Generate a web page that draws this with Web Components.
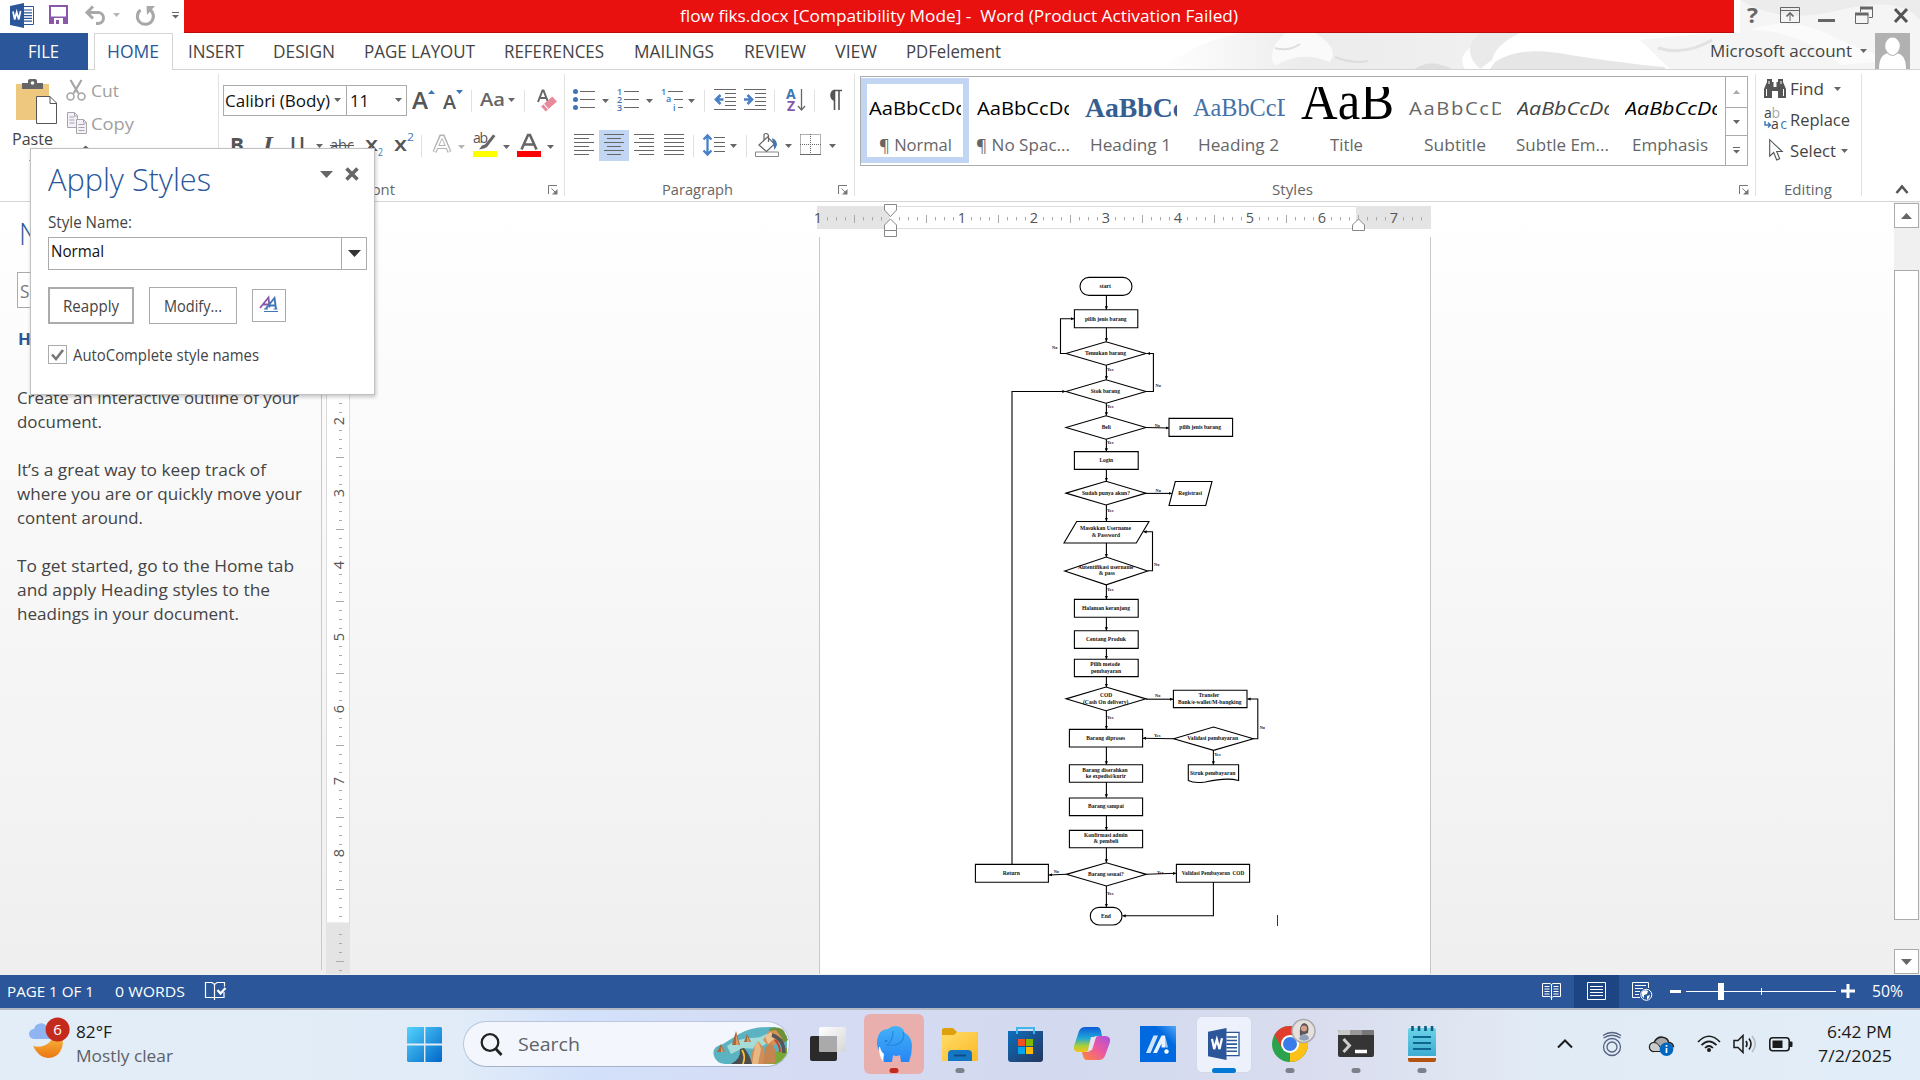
<!DOCTYPE html>
<html lang="en">
<head>
<meta charset="utf-8">
<title>flow fiks.docx - Word</title>
<style>
html,body{margin:0;padding:0;width:1920px;height:1080px;overflow:hidden;background:#fff}
body{font-family:"Open Sans","Noto Sans",sans-serif;color:#444}
</style>
</head>
<body>
<word-desktop></word-desktop>
<script>
const SERIF = "'Liberation Serif',serif";

/* ---------- layout helpers ---------- */
// One flex row: items are [x, width, y, height, html] in window coordinates, turned into margins.
function row(top, height, items, left = 0) {
  let end = left;
  const body = items.map(([x, w, y, h, html]) => {
    const s = `<div style="flex:none;width:${w}px;height:${h}px;margin:${y - top}px 0 0 ${x - end}px">${html}</div>`;
    end = x + w;
    return s;
  }).join('');
  return `<div style="display:flex;align-items:flex-start;height:${height}px">${body}</div>`;
}
// A text fitted between two ink edges, on a baseline.
function T(x1, x2, base, size, text, style = '', serif = false) {
  const w = x2 - x1 + 2, k = serif ? 0.3375 : 0.388;
  return [x1 - 1, w, Math.round(base - 12 - k * size), 24,
    `<fit-text w="${w}" style="font-size:${size}px;${serif ? `font-family:${SERIF};` : ''}${style}">${text}</fit-text>`];
}
function I(x, y, w, h, body, attrs = '') {
  return [x, w, y, h, `<svg width="${w}" height="${h}" viewBox="0 0 ${w} ${h}" style="display:block;overflow:visible" fill="none" ${attrs}>${body}</svg>`];
}
const arrow = (x, y, c = '#666', w = 7, h = 4) => I(x, y, w, h, `<path d="M0 0h${w}L${w / 2} ${h}z" fill="${c}"/>`);
const vsep = (x, y, h, c = '#e1e1e1') => [x, 1, y, h, `<div style="width:1px;height:${h}px;background:${c}"></div>`];
const launcher = (x, y) => I(x, y, 10, 10, '<path d="M.5 9V.5H9" stroke="#777"/><path d="M3.500 3.500l4 4" stroke="#777"/><path d="M9.500 4v5.500h-5.500z" fill="#777"/>');

function define(name, css, html, after) {
  customElements.define(name, class extends HTMLElement {
    constructor() { super(); this.attachShadow({ mode: 'open' }); }
    connectedCallback() {
      this.shadowRoot.innerHTML = `<style>:host{display:block}*{box-sizing:border-box}${css}</style>` + (typeof html === 'function' ? html(this) : html);
      if (after) after(this);
    }
  });
}

define('fit-text', ':host{line-height:24px;white-space:pre}span{display:inline-block;transform-origin:0 50%}:host([strike]) span{text-decoration:line-through}', '<span><slot></slot></span>', el => {
  const s = el.shadowRoot.querySelector('span'), w = +el.getAttribute('w');
  const n = s.getBoundingClientRect().width;
  if (w && n) s.style.transform = `scaleX(${w / n})`;
  el.style.width = w + 'px';
});

const wordLogo = `<path d="M12 3.500h11.500v18H12z" fill="#fff" stroke="#2b579a"/><path d="M14 7h8M14 9.800h8M14 12.600h8M14 15.400h8M14 18.200h8" stroke="#2b579a" stroke-width="1.200"/><path d="M0 3L14 0v25L0 22z" fill="#2b579a"/><path d="M3 8.500l1.700 8 2-7.500 2 7.500 1.900-8.500" stroke="#fff" stroke-width="1.700"/>`;

/* ---------- title bar ---------- */
define('title-bar', ':host{height:33px;position:relative}.red{background:#e91010;border-bottom:1px solid #b90c0c;height:33px}', () => row(0, 33, [
  I(10, 3, 24, 25, wordLogo),
  I(49, 5, 19, 19, '<path d="M1 1h17v17H1z" stroke="#8a58a9" stroke-width="2"/><path d="M0 11.500h19V19H0z" fill="#8a58a9"/><path d="M5 13h9v6H5z" fill="#fff"/><path d="M7 15h3v4H7z" fill="#8a58a9"/>'),
  I(85, 6, 21, 19, '<path d="M2 6.500h11a5.500 5.500 0 010 11H11" stroke="#a8a8a8" stroke-width="3"/><path d="M8 .5L2 6.500l6 6" stroke="#a8a8a8" stroke-width="3"/>'),
  arrow(113, 13, '#b5b5b5'),
  I(136, 6, 19, 19, '<path d="M12.500 3A8 8 0 1 1 4.500 4" stroke="#a8a8a8" stroke-width="3"/><path d="M10.500 0H19L11 9z" fill="#a8a8a8"/>'),
  I(172, 12, 7, 7, '<path d="M0 .5h7" stroke="#666"/><path d="M0 3h7L3.500 6.500z" fill="#666"/>'),
  [184, 1550, 0, 33, '<div class="red">' + row(0, 32, [T(681, 1237, 23, 17, 'flow fiks.docx [Compatibility Mode] -  Word (Product Activation Failed)', 'color:#fff')], 184) + '</div>'],
  T(1748, 1757, 23, 21, '?', 'font-weight:700;color:#666'),
  I(1780, 7, 20, 16, '<path d="M.5.5h19v15H.5zM.5 3.500h19M10 14V7" stroke="#666"/><path d="M6.500 9.500L10 6l3.500 3.500" stroke="#666" stroke-width="1.700"/>'),
  I(1818, 19, 17, 3, '<path d="M0 1.500h17" stroke="#666" stroke-width="3"/>'),
  I(1855, 6, 19, 18, '<path d="M5.500 6V2H17.500V11.500H14" stroke="#666"/><path d="M5 2h13" stroke="#666" stroke-width="3"/><path d="M.5 8h12.500v9.500H.5z" stroke="#666"/><path d="M0 8h13.500" stroke="#666" stroke-width="3"/>'),
  I(1893, 8, 16, 15, '<path d="M2 1l12 13M14 1L2 14" stroke="#555" stroke-width="3"/>'),
]));

/* ---------- tabs ---------- */
define('ribbon-tabs', ':host{height:37px;border-bottom:1px solid #d4d4d4;box-sizing:border-box}.file{height:37px;background:#2b579a}.home{height:37px;background:#fff;border:1px solid #d4d4d4;border-bottom:0}', () => row(33, 37, [
  [0, 88, 33, 37, '<div class="file">' + row(33, 37, [T(29, 58, 58, 17.5, 'FILE', 'color:#fff')]) + '</div>'],
  [94, 79, 33, 37, '<div class="home">' + row(34, 36, [T(108, 158, 58, 17.5, 'HOME', 'color:#2b579a')], 95) + '</div>'],
  ...[[189, 243, 'INSERT'], [274, 334, 'DESIGN'], [365, 474, 'PAGE LAYOUT'], [505, 603, 'REFERENCES'], [635, 713, 'MAILINGS'], [745, 805, 'REVIEW'], [836, 876, 'VIEW'], [907, 1000, 'PDFelement']].map(t => T(t[0], t[1], 58, 17.5, t[2])),
  T(1711, 1851, 57, 16.5, 'Microsoft account'),
  arrow(1860, 49, '#666'),
  I(1875, 33, 35, 36, '<path d="M0 0h35v36H0z" fill="#b1b1b1"/><ellipse cx="17.500" cy="13" rx="7.300" ry="8.500" fill="#fff"/><path d="M4 36c0-11 4-15 9-15.500h9c5 .5 9 4.500 9 15.500z" fill="#fff"/><path d="M13 20.500q4.500 4 9 0" stroke="#b1b1b1"/>'),
]));

/* ---------- ribbon ---------- */
const lines = (ys) => ys.map(([y, a, b]) => `<path d="M${a} ${y + .5}H${b}" stroke="#666"/>`).join('');

define('clipboard-group', ':host{width:218px;height:131px}', () =>
  `<div style="display:flex"><div style="width:62px">` +
  row(70, 59, [I(16, 79, 41, 45, '<path d="M0 5h33v36H0z" fill="#edc87e" /><path d="M6 4h6V1.500Q12 0 14 0h5q2 0 2 1.500V4h6v6H6z" fill="#666"/><circle cx="16.500" cy="4" r="1.800" fill="#fff"/><path d="M20.500 17.500H34l6.500 6.500v20.500h-20z" fill="#fff" stroke="#555"/><path d="M34 17.500v7h6.500" stroke="#555"/>')]) +
  row(129, 26, [T(13, 52, 145, 16.5, 'Paste')]) +
  row(155, 8, [arrow(29, 160)]) +
  `</div><div>` +
  row(70, 36, [I(66, 80, 20, 21, '<path d="M4.500 0l8 13.500M15.500 0l-8 13.500" stroke="#a6a6a6" stroke-width="2.200"/><circle cx="4.500" cy="16.500" r="3.500" stroke="#a6a6a6" stroke-width="1.600"/><circle cx="15.500" cy="16.500" r="3.500" stroke="#a6a6a6" stroke-width="1.600"/>'), T(92, 118, 97, 16.5, 'Cut', 'color:#a0a0a0')], 62) +
  row(106, 32, [I(67, 112, 20, 22, '<g fill="#f6f0fa" stroke="#a6a6a6"><path d="M.5.5h7l3 3v12H.5z"/><path d="M9.500 7.500h7l3 3v11h-10z"/></g><path d="M2.500 5h5M2.500 8h5M2.500 11h5M11.500 12.500h6M11.500 15.500h6M11.500 18.500h6M7.500.5v3.500h3M16.500 7.500v3.500h3" stroke="#a6a6a6"/>'), T(92, 133, 130, 16.5, 'Copy', 'color:#a0a0a0')], 62) +
  row(138, 20, [I(82, 145, 8, 8, '<path d="M0 4l3.500-3.500L8 4v4H0z" fill="#666"/>')], 62) +
  `</div></div>`);

define('font-group', ':host{width:345px;height:131px}.cb{height:31px;border:1px solid #ababab;background:#fff}', () =>
  row(70, 50, [
    [223, 124, 85, 31, '<div class="cb">' + row(86, 29, [T(226, 329, 108, 17, 'Calibri (Body)', 'color:#111'), arrow(334, 98)], 224) + '</div>'],
    [347, 60, 85, 31, '<div class="cb" style="border-left:0">' + row(86, 29, [T(351, 368, 108, 17, '11', 'color:#111'), arrow(395, 98)], 347) + '</div>'],
    T(413, 427, 109, 23, 'A', 'font-weight:600;color:#555'),
    I(428, 90, 7, 4, '<path d="M0 4h7L3.500 0z" fill="#3e76b5"/>'),
    T(444, 455, 109, 19, 'A', 'font-weight:600;color:#555'),
    I(456, 90, 7, 4, '<path d="M0 0h7L3.500 4z" fill="#3e76b5"/>'),
    vsep(471, 90, 22),
    T(481, 504, 106, 18, 'Aa', 'font-weight:600;color:#666'),
    arrow(508, 98), vsep(524, 90, 22),
    I(538, 90, 19, 21, '<path d="M0 12L4.500.5h1L10 12M2 8h6" stroke="#666" stroke-width="2"/><g transform="rotate(-42 11 14)"><path d="M3.500 10.500h15v7h-15z" fill="#e8899a"/><path d="M7 10v8" stroke="#fff"/></g>'),
  ], 219) +
  row(120, 60, [
    T(231, 243, 153, 22, 'B', 'font-weight:700;color:#555'),
    T(264, 272, 153, 22, 'I', 'font-style:italic;font-weight:600;color:#555;font-family:' + SERIF),
    T(291, 304, 153, 22, 'U', 'color:#555;font-weight:600'),
    arrow(316, 144),
    (t => (t[4] = t[4].replace('<fit-text', '<fit-text strike'), t))(T(331, 353, 151, 16, 'abc', 'color:#555')),
    T(366, 377, 152, 20, 'x', 'color:#555;font-weight:600'), T(379, 382, 156, 11, '2', 'color:#3e76b5'),
    T(395, 406, 152, 20, 'x', 'color:#555;font-weight:600'), T(408, 413, 141, 11, '2', 'color:#3e76b5'),
    vsep(421, 135, 22),
    I(433, 135, 18, 18, '<path d="M1.500 17L8 1.500h2L16.500 17M4.500 12h9" stroke="#b4b4b4" stroke-width="4.200"/><path d="M1.700 16.500L8.300 2h1.400L16.300 16.500M4.500 12h9" stroke="#fff" stroke-width="1.800"/>'),
    arrow(458, 145, '#b5b5b5'),
    I(473, 134, 24, 23, '<path d="M0 17h24v6H0z" fill="#ff0"/><path d="M22.500 2L14 13l-3 1.500-5 1 3-4 3-1L20 .5z" fill="#666"/><text x="0" y="9" font-size="14" fill="#555" textLength="15" font-family="Open Sans">ab</text>'),
    arrow(503, 145),
    I(517, 134, 24, 23, '<path d="M0 17h24v6H0z" fill="red"/><path d="M4.500 15.500L11 1h2l6.500 14.500M7 10.500h10" stroke="#666" stroke-width="2.600"/>'),
    arrow(547, 145),
  ], 219) +
  row(180, 21, [T(365, 394, 195, 15, 'Font', 'color:#666'), launcher(548, 185)], 219));

define('paragraph-group', ':host{width:289px;height:131px}.on{background:#c2d5f2;height:31px}', () => {
  const tail = (x) => arrow(x, 99);
  const list = (labels) => labels + lines([[2, 7, 22], [10, 7, 22], [18, 7, 22]]);
  const num = (x, y, s) => `<text x="${x}" y="${y}" font-size="9" fill="#3e76b5" font-family="Open Sans" font-weight="600">${s}</text>`;
  const al = (xs) => lines(xs.map((p, i) => [i * 4, p[0], p[1]]));
  return row(70, 55, [
    I(573, 89, 22, 21, list('<g fill="#3e76b5"><circle cx="2.500" cy="2.500" r="2.500"/><circle cx="2.500" cy="10.500" r="2.500"/><circle cx="2.500" cy="18.500" r="2.500"/></g>')), tail(602),
    I(617, 89, 22, 21, list(num(0, 6, 1) + num(0, 14, 2) + num(0, 22, 3))), tail(646),
    I(661, 89, 22, 21, num(0, 6, 1) + num(5, 13, 'a') + num(12, 22, 'i') + lines([[2, 7, 22], [10, 13, 22], [18, 17, 22]])), tail(688),
    vsep(704, 90, 22),
    I(714, 89, 22, 21, lines([[0, 0, 22], [4, 11, 22], [8, 11, 22], [12, 11, 22], [16, 11, 22], [20, 0, 22]]) + '<path d="M9.500 10.500H3M6.500 6l-4.500 4.500 4.500 4.500" stroke="#4a80c8" stroke-width="2.700"/>'),
    I(744, 89, 22, 21, lines([[0, 0, 22], [4, 11, 22], [8, 11, 22], [12, 11, 22], [16, 11, 22], [20, 0, 22]]) + '<path d="M0 10.500h7M3.500 6L8 10.500 3.500 15" stroke="#4a80c8" stroke-width="2.700"/>'),
    vsep(774, 90, 22),
    I(786, 89, 19, 22, '<text x="0" y="10" font-size="14" font-weight="700" fill="#3e76b5" font-family="Open Sans">A</text><text x="1" y="22" font-size="14" font-weight="700" fill="#8a58a9" font-family="Open Sans">Z</text><path d="M15.500 0v20M12 17l3.500 4 3.500-4" stroke="#666" stroke-width="1.300"/>'),
    vsep(814, 90, 22),
    I(826, 89, 17, 22, '<path d="M8 1.500h8M8.500 1v20M13 1v20" stroke="#555" stroke-width="1.600"/><path d="M8.500.5A6 6 0 0 0 8.500 12z" fill="#555"/>'),
  ], 565) +
  row(125, 55, [
    I(574, 134, 20, 21, al([[0, 20], [0, 15], [0, 20], [0, 15], [0, 20], [0, 15]])),
    [599, 30, 130, 31, '<div class="on">' + row(130, 31, [I(604, 134, 20, 21, al([[0, 20], [3, 17], [0, 20], [3, 17], [0, 20], [3, 17]]))], 599) + '</div>'],
    I(634, 134, 20, 21, al([[0, 20], [5, 20], [0, 20], [5, 20], [0, 20], [5, 20]])),
    I(664, 134, 20, 21, al([[0, 20], [0, 20], [0, 20], [0, 20], [0, 20], [0, 20]])),
    vsep(693, 135, 22),
    I(703, 134, 22, 22, lines([[3, 11, 22], [8, 11, 22], [12, 11, 22], [17, 11, 22]]) + '<path d="M4.500 2v18M.5 5.500l4-4 4 4M.5 16.500l4 4 4-4" stroke="#4a80c8" stroke-width="2.300"/>'),
    arrow(730, 144), vsep(746, 135, 22),
    I(755, 133, 24, 24, '<path d="M.5 19h23v4.500H.5z" stroke="#888"/><path d="M4 12l8.500-8 7 7-8 7.500zM9 7V2.500Q9 .5 11 .5t2.500 2V9" stroke="#666" stroke-width="1.200"/><path d="M17 5q5 2 5 7l-2.500 5-1.500-7z" fill="#3e76b5"/>'),
    arrow(785, 144),
    I(800, 134, 21, 21, '<path d="M.5.5h20v20M.5.5v20M10.500 0v21M0 10.500h21" stroke="#666" stroke-dasharray="1 1"/><path d="M0 20.500h21" stroke="#666"/>'),
    arrow(829, 144),
  ], 565) +
  row(180, 21, [T(663, 732, 195, 15, 'Paragraph', 'color:#666'), launcher(838, 185)], 565);
});

define('style-card', ':host{width:108px;height:87px;overflow:hidden}.b{height:85px;margin-top:1px;border:6px solid transparent}:host([on]) .b{border-color:#c2d5f2}.s{width:92px;height:35px;margin:3px 0 0 2px;overflow:hidden}', el => {
  const [a, b, label] = [el.getAttribute('a'), el.getAttribute('b'), el.getAttribute('label')];
  return `<div class="b"><div class="s"><slot></slot></div>` + row(122, 30, [T(+a, +b, 151, 16.5, label, 'color:#666')], 6) + '</div>';
});

define('style-gallery', ':host{width:900px;height:131px}.box{display:flex;width:888px;height:90px;border:1px solid #ababab;background:#fff}.sc{width:22px;height:88px;border-left:1px solid #ababab}.sc>div+div{border-top:1px solid #ababab}', () => {
  const s = (w, size, base, text, style = '', serif = false) => row(87, 35, [T(870, 870 + w, base, size, text, style, serif)], 869);
  const cards = [
    [880, 951, '¶ Normal', s(94, 18.5, 115, 'AaBbCcDc', 'color:#000')],
    [869, 961, '¶ No Spac...', s(94, 18.5, 115, 'AaBbCcDc', 'color:#000')],
    [875, 954, 'Heading 1', s(98, 28, 117, 'AaBbCc', 'color:#365f91;font-weight:700', true)],
    [875, 954, 'Heading 2', s(99, 26, 117, 'AaBbCcD', 'color:#4472a8', true)],
    [899, 930, 'Title', s(91, 54, 119, 'AaB', 'color:#000', true)],
    [885, 945, 'Subtitle', s(96, 18.5, 115, 'AaBbCcD', 'color:#666;letter-spacing:1.500px')],
    [869, 960, 'Subtle Em...', s(94, 18.5, 115, 'AaBbCcDc', 'color:#444;font-style:italic')],
    [877, 951, 'Emphasis', s(94, 18.5, 115, 'AaBbCcDc', 'color:#000;font-style:italic')],
  ];
  return row(70, 110, [[860, 888, 76, 90, '<div class="box">' + cards.map((c, i) => `<style-card ${i ? '' : 'on'} a="${c[0] - 861}" b="${c[1] - 861}" label="${c[2]}">${c[3]}</style-card>`).join('') +
    '<div class="sc"><div style="height:30px">' + row(77, 30, [I(1733, 90, 7, 4, '<path d="M0 4h7L3.500 0z" fill="#aaa"/>')], 1726) +
    '</div><div style="height:28px">' + row(108, 27, [arrow(1733, 120)], 1726) +
    '</div><div style="height:30px">' + row(136, 29, [I(1733, 147, 7, 7, '<path d="M0 .5h7" stroke="#666"/><path d="M0 3h7L3.500 6.500z" fill="#666"/>')], 1726) + '</div></div></div>']], 855) +
    row(180, 21, [T(1273, 1312, 195, 15, 'Styles', 'color:#666'), launcher(1739, 185)], 855);
});

define('editing-group', ':host{width:105px;height:131px}', () =>
  row(70, 35, [I(1764, 78, 22, 20, '<path d="M3 1h5v3h1.500v5h3V4H14V1h5v3l3 7v9h-8v-7h-6v7H0v-9l3-7z" fill="#555"/><path d="M2.500 11v7M19.500 11v7M5 3v3M17 3v3" stroke="#fff"/>'), T(1791, 1823, 95, 16.5, 'Find'), arrow(1834, 87)], 1756) +
  row(105, 31, [I(1764, 108, 23, 22, '<g font-family="Open Sans" font-size="14"><text x="0" y="10" fill="#444" textLength="16">a<tspan fill="#aaa">b</tspan></text><text x="7" y="21" fill="#444" textLength="16">a<tspan fill="#3e76b5">c</tspan></text></g><path d="M1 13v4h5M4 14.500L6.500 17 4 19.500" stroke="#3e76b5" stroke-width="1.400"/>'), T(1791, 1849, 126, 16.5, 'Replace')], 1756) +
  row(136, 44, [I(1769, 139, 14, 22, '<path d="M.7.700v16.500l4-3.700 3 7.500 3-1.200-3-7.300h5.500z" stroke="#555" stroke-width="1.100" fill="#fff"/>'), T(1791, 1835, 157, 16.5, 'Select'), arrow(1841, 149)], 1756) +
  row(180, 21, [T(1785, 1831, 195, 15, 'Editing', 'color:#666'), I(1895, 184, 14, 10, '<path d="M1.500 9L7 2.500 12.500 9" stroke="#555" stroke-width="2.600"/>')], 1756));

define('ribbon-bar', ':host{height:132px;box-sizing:border-box;background:#fff;border-bottom:1px solid #d4d4d4;display:flex}i{flex:none;width:1px;height:122px;margin-top:4px;background:#e1e1e1}',
  '<clipboard-group></clipboard-group><i></i><font-group></font-group><i></i><paragraph-group></paragraph-group><i></i><style-gallery></style-gallery><i></i><editing-group></editing-group><i></i>');

/* ---------- workspace ---------- */
define('nav-pane', ':host{box-sizing:border-box;width:322px;height:768px;border-right:1px solid #c9c9c9;margin:0 0 5px 0}.sb{border:1px solid #ababab;height:36px;background:#fff}', () =>
  row(202, 60, [T(20, 150, 245, 32, 'Navigation', 'color:#2b579a;font-weight:300')]) +
  row(262, 60, [[17, 290, 272, 36, '<div class="sb">' + row(273, 34, [T(21, 160, 298, 18, 'Search document', 'color:#777')], 18) + '</div>']]) +
  row(322, 60, [T(19, 104, 345, 16.5, 'HEADINGS', 'color:#2b579a;font-weight:700')]) +
  [['Create an interactive outline of your', 298], ['document.', 101], null, ['It’s a great way to keep track of', 265], ['where you are or quickly move your', 301], ['content around.', 142], null, ['To get started, go to the Home tab', 293], ['and apply Heading styles to the', 269], ['headings in your document.', 238]]
    .map((l, i) => l ? row(382 + 24 * i, 24, [T(18, l[1], 404 + 24 * i, 16.5, l[0])]) : '<div style="height:24px"></div>').join(''));

define('vertical-ruler', ':host{width:28px;height:772px}', () => {
  let s = '<path d="M.5 0h23v721H.5z" fill="#fff" stroke="#dcdcdc"/><path d="M0 721h24v51H0z" fill="#e4e4e4"/>';
  for (let y = 403; y < 973; y += 9) {
    const k = Math.round((y - 421) / 9);
    if (((k % 8) + 8) % 8 === 0 && y < 920) s += `<text transform="translate(18 ${y - 202}) rotate(-90)" text-anchor="middle" font-size="14.500" fill="#555" font-family="Open Sans">${2 + k / 8}</text>`;
    else if (y !== 925) s += ((k % 8) + 8) % 8 === 4 ? `<path d="M10 ${y - 201.5}h8" stroke="#aaa"/>` : `<path d="M13 ${y - 201.5}h3" stroke="#aaa"/>`;
  }
  return row(202, 772, [I(4, 202, 24, 772, s)]);
});

define('horizontal-ruler', ':host{width:614px;height:23px;margin:4px 0 0 467px}', () => {
  let s = '<path d="M0 0h614v23H0z" fill="#e4e4e4"/><path d="M73 .5h466v22H73z" fill="#fff"/><path d="M73 .5h466M73 22.500h466" stroke="#dcdcdc"/>';
  for (let k = -8; k <= 59; k++) {
    const x = 73 + 9 * k + .5, m = ((k % 8) + 8) % 8;
    if (k === 0) continue;
    if (m === 0) s += `<text x="${x - .5}" y="17" text-anchor="middle" font-size="14.500" fill="#555" font-family="Open Sans">${Math.abs(k / 8)}</text>`;
    else s += m === 4 ? `<path d="M${x} 9v8" stroke="#aaa"/>` : `<path d="M${x} 11v3.500" stroke="#aaa"/>`;
  }
  s += '<g fill="#fff" stroke="#888"><path d="M67.500-1.500h12v5.500L73.500 10.500l-6-6.500z"/><path d="M67.500 24.500v-5.500L73.500 13l6 6v5.500z"/><path d="M67.500 24.500h12v6h-12z"/><path d="M535.500 24.500v-5.500l6-6 6 6v5.500z"/></g>';
  return `<svg width="614" height="23" style="display:block;overflow:visible" fill="none">${s}</svg>`;
});

/* flowchart nodes are placed on the drawing canvas of the document */
define('flow-chart', ':host{width:300px;height:660px}', () => {
  let s = '';
  const txt = (a, b, y, t, fs = 6.4) => { s += `<text x="${a}" y="${y}" font-size="${fs}" textLength="${b - a}" lengthAdjust="spacingAndGlyphs">${t}</text>`; };
  const box = (x1, y1, x2, y2) => { s += `<path d="M${x1} ${y1}H${x2}V${y2}H${x1}z"/>`; };
  const dia = (x1, x2, y1, y2) => { const c = (x1 + x2) / 2, m = (y1 + y2) / 2; s += `<path d="M${x1} ${m}L${c} ${y1}L${x2} ${m}L${c} ${y2}z"/>`; };
  const go = d => { s += `<path d="${d}" marker-end="url(#a)"/>`; };
  const down = (y1, y2, x = 1106.4) => go(`M${x} ${y1}V${y2}`);
  const lab = (x, y, t) => txt(x, x + (t === 'No' ? 5.3 : 6.6), y, t, 4.2);
  s += '<rect x="1080" y="277.400" width="52" height="18" rx="9"/><rect x="1090.300" y="907.400" width="31.700" height="17.600" rx="8.800"/>';
  txt(1099.5, 1111, 288, 'start'); down(295.5, 309.5);
  box(1074.4, 309.8, 1137.8, 327.7); txt(1085, 1126.5, 320.5, 'pilih jenis barang'); down(327.7, 341.5);
  dia(1066, 1146, 341.7, 365.3); txt(1085, 1126, 355.3, 'Temukan barang'); down(365.3, 379.5); lab(1107, 371, 'Yes');
  go('M1066 353.500H1060.500V318.800H1074'); lab(1052, 349, 'No');
  go('M1146 391.500H1153.400V353.500H1147'); lab(1155.5, 387, 'No');
  dia(1066, 1146, 379.7, 403.3); txt(1090.7, 1120, 393.3, 'Stok barang'); down(403.3, 415.5); lab(1107, 408, 'Yes');
  dia(1066, 1146, 415.7, 439.3); txt(1101.7, 1110.7, 429.2, 'Beli'); down(439.3, 451.5); lab(1107, 444, 'Yes');
  go('M1146 427.500L1168.800 428'); lab(1154.7, 426.5, 'No');
  box(1169, 418.4, 1232.6, 436.4); txt(1179.3, 1221, 429.2, 'pilih jenis barang');
  box(1074.4, 451.6, 1138.2, 469.4); txt(1099.4, 1113, 462, 'Login'); down(469.4, 481);
  dia(1066, 1146, 481.3, 505); txt(1082, 1130, 494.8, 'Sudah punya akun?'); down(505, 521); lab(1107, 512, 'Yes');
  go('M1146 493.400H1171.700'); lab(1155.5, 492, 'No');
  s += '<path d="M1175.300 481.500H1212L1205.700 505.500H1169z"/><path d="M1076.700 521.500H1149L1136.300 543H1064z"/>';
  txt(1178.3, 1202, 495, 'Registrasi');
  txt(1080, 1131, 530, 'Masukkan Username'); txt(1091.7, 1120, 536.6, '&amp; Password'); down(543, 557);
  dia(1064.7, 1147.7, 557, 584.8); txt(1078, 1133.5, 569.2, 'Autentifikasi username'); txt(1098.7, 1115, 575.3, '&amp; pass'); down(584.8, 599); lab(1107, 591, 'Yes');
  go('M1147.700 570.800H1152.500V531.800H1143.500'); lab(1154, 566, 'No');
  box(1074.4, 599.4, 1138.2, 617.3); txt(1082, 1130, 610.3, 'Halaman keranjang'); down(617.3, 630.5);
  box(1074.4, 630.8, 1138.2, 648.4); txt(1086, 1126, 641.2, 'Centang Produk'); down(648.4, 659);
  box(1074.4, 659.2, 1138.2, 676.6); txt(1090.3, 1120, 666.4, 'Pilih metode'); txt(1091, 1121, 672.6, 'pembayaran'); down(676.6, 687);
  dia(1066, 1146, 687, 710.7); txt(1100, 1112.3, 697.3, 'COD'); txt(1083, 1128.3, 703.6, '(Cash On delivery)'); down(710.7, 729); lab(1107, 719, 'Yes');
  go('M1146 699.200H1173'); lab(1155, 696.5, 'No');
  box(1173.4, 690.3, 1247, 707.6); txt(1198.5, 1219.3, 697.2, 'Transfer'); txt(1178, 1241.5, 703.7, 'Bank/e-wallet/M-bangking');
  box(1069.4, 729.4, 1142.6, 747); txt(1086.3, 1125.3, 739.8, 'Barang diproses'); down(747, 764.5);
  dia(1173.7, 1253.3, 727, 750.4); txt(1187.3, 1238, 740.3, 'Validasi pembayaran'); down(750.4, 764.5, 1213.4); lab(1214.3, 756.3, 'Yes');
  go('M1253.300 738.700H1257.800V699H1247.500'); lab(1259.7, 729, 'No');
  go('M1173.700 738.700L1143 738.300'); lab(1154, 737.3, 'Yes');
  s += '<path d="M1188.300 764.700H1238.600V780.500C1226 777 1212 780.500 1205 782C1198 783 1192 782.500 1188.300 780.500z"/>'; txt(1190, 1235.3, 775, 'Struk pembayaran');
  box(1069.4, 764.8, 1142.6, 782.3); txt(1082.3, 1127.7, 771.7, 'Barang diserahkan'); txt(1085.7, 1126, 777.8, 'ke expedisi/kurir'); down(782.3, 797.5);
  box(1069.4, 798, 1142.6, 815.6); txt(1088, 1123.7, 808.3, 'Barang sampai'); down(815.6, 830);
  box(1069.4, 830.4, 1142.6, 847.8); txt(1084, 1127.7, 837.3, 'Konfirmasi admin'); txt(1093.5, 1118.3, 843.4, '&amp; pembeli'); down(847.8, 862.5);
  dia(1066.4, 1146.4, 862.7, 886); txt(1088, 1123.7, 875.7, 'Barang sesuai?'); down(886, 907); lab(1107, 895, 'Yes');
  go('M1066.400 874.300L1049 875'); lab(1053.7, 873, 'No');
  go('M1146.400 874.300L1176 873.300'); lab(1157, 873.5, 'Yes');
  box(975.4, 864.4, 1048.4, 882.3); txt(1002.7, 1020, 875, 'Return');
  box(1176.4, 864.4, 1249.6, 882.3); txt(1181.7, 1244.3, 875.4, 'Validasi Pembayaran&#160; COD', 6);
  txt(1101, 1110.7, 917.7, 'End');
  go('M1012 864.400V391.500H1065.500'); go('M1213.400 882.300V915.800H1122.500');
  return `<svg width="300" height="660" viewBox="970 270 300 660" style="display:block" fill="none" stroke="#000" stroke-width="1.100"><defs><marker id="a" markerUnits="userSpaceOnUse" markerWidth="4" markerHeight="4" refX="3.200" refY="2" orient="auto"><path d="M0 .4L3.400 2L0 3.600z" fill="#000" stroke="none"/></marker></defs><style>text{fill:#111;stroke:none;font-family:"Liberation Serif",serif;font-weight:700}</style>${s}</svg>`;
});

define('document-page', ':host{width:612px;height:737px;margin:8px 0 0 469px;box-sizing:border-box;background:#fff;border:solid #c8c8c8;border-width:0 1px;display:flex}flow-chart{margin:33px 0 0 150px}.c{width:1px;height:11px;background:#333;margin:678px 0 0 7px}', '<flow-chart></flow-chart><div class="c"></div>');

define('scroll-bar', ':host{width:26px;height:772px;background:#f0f0f0}.b{width:25px;height:25px;border:1px solid #ababab;background:#fff}', () =>
  row(202, 68, [[0, 25, 203, 25, '<div class="b">' + row(204, 23, [I(7, 213, 11, 6, '<path d="M0 6h11L5.500 0z" fill="#666"/>')], 1) + '</div>']]) +
  '<div class="b" style="height:650px"></div>' +
  row(920, 54, [[0, 25, 949, 25, '<div class="b">' + row(950, 23, [arrow(7, 959, '#666', 11, 6)], 1) + '</div>']]));

define('work-space', ':host{height:773px;background:linear-gradient(#fff,#efefef);display:flex}.m{width:1544px}', '<nav-pane></nav-pane><vertical-ruler></vertical-ruler><div class="m"><horizontal-ruler></horizontal-ruler><document-page></document-page></div><scroll-bar></scroll-bar>');

/* ---------- floating Apply Styles pane ---------- */
define('apply-styles', ':host{position:absolute;left:30px;top:148px;width:345px;height:247px;background:#fff;border:1px solid #c0c0c0;box-shadow:1px 2px 4px rgba(0,0,0,.22);box-sizing:border-box}.x{border:1px solid #ababab;background:#fff;height:100%;width:100%}', () =>
  row(149, 62, [T(49, 210, 191, 31, 'Apply Styles', 'color:#2b579a;font-weight:300'), arrow(320, 171, '#666', 13, 7), I(345, 167, 14, 14, '<path d="M1.500 1.500l11 11M12.500 1.500l-11 11" stroke="#666" stroke-width="3.600"/>')], 31) +
  row(211, 26, [T(49, 131, 228, 15.5, 'Style Name:')], 31) +
  row(237, 50, [[48, 294, 237, 33, '<div class="x">' + row(238, 31, [T(52, 103, 257, 15.5, 'Normal', 'color:#111')], 49) + '</div>'], [342, 25, 237, 33, '<div class="x" style="border-left:0">' + row(238, 31, [arrow(348, 250, '#333', 13, 7)], 342) + '</div>']], 31) +
  row(287, 50, [
    [48, 86, 287, 37, '<div class="x" style="border-width:2px">' + row(289, 33, [T(64, 118, 312, 15.5, 'Reapply')], 50) + '</div>'],
    [149, 88, 287, 37, '<div class="x">' + row(288, 35, [T(165, 221, 312, 15.5, 'Modify...')], 150) + '</div>'],
    [252, 34, 289, 33, '<div class="x">' + row(290, 31, [I(259, 296, 20, 17, '<path d="M1 12L9.500 1.500l1 10M4 8.500h6" stroke="#8a58a9" stroke-width="1.800"/><path d="M6.500 13L15.500 2l1.500 11M10 9.500h7" stroke="#3e76b5" stroke-width="1.900"/><path d="M5 13h4M14.500 13h4M5 15.500h14" stroke="#3e76b5"/>')], 253) + '</div>'],
  ], 31) +
  row(337, 50, [[48, 19, 345, 19, '<div class="x">' + row(346, 17, [I(51, 349, 13, 12, '<path d="M1 5.500l4 4.500L12 1" stroke="#777" stroke-width="2.600"/>')], 49) + '</div>'], T(74, 258, 361, 15.5, 'AutoComplete style names')], 31));

/* ---------- status bar ---------- */
define('status-bar', ':host{height:33px;background:#2b579a}.on{height:33px;background:#1d4583}', () => {
  const c = 'color:#fff';
  return row(975, 33, [
    T(8, 93, 997, 14.7, 'PAGE 1 OF 1', c), T(116, 184, 997, 14.7, '0 WORDS', c),
    I(205, 982, 21, 18, '<path d="M9.500 15.500H.5V.5H7l2.500 2 2.500-2h7.500v4M9.500 2.500V18M9.500 15.500h9.500V10" stroke="#fff" stroke-width="1.200"/><path d="M12.500 8l3 3.500L20.500 6" stroke="#fff" stroke-width="2.300"/>'),
    I(1542, 982, 19, 18, '<path d="M.5 1.500H8l1.500 1 1.500-1h7.500v13H11l-1.500 1.500L8 14.500H.5zM9.500 2v16" stroke="#fff"/><path d="M2.500 4.500h5M2.500 7h5M2.500 9.500h5M2.500 12h5M11.500 4.500h5M11.500 7h5M11.500 9.500h5M11.500 12h5" stroke="#fff" stroke-width="1.200"/>'),
    [1574, 45, 975, 33, '<div class="on">' + row(975, 33, [I(1587, 982, 19, 18, '<path d="M.5.5h18v17H.5z" stroke="#fff"/><path d="M3 4.500h13M3 7.500h13M3 10.500h13M3 13.500h13" stroke="#fff"/>')], 1574) + '</div>'],
    I(1632, 982, 20, 19, '<path d="M8 15.500H.5V.5h16V6M3 3.500h11M3 6.500h8M3 9.500h5M3 12.500h4" stroke="#fff"/><circle cx="14.300" cy="12.800" r="5.500" stroke="#fff"/><path d="M10 10q3-3 6-1l-1 3-3 1v3q-3-2-2-6zM15 14l3-1-1 3-2 1.500z" fill="#fff"/>'),
    I(1670, 990, 11, 3, '<path d="M0 1.500h11" stroke="#fff" stroke-width="3"/>'),
    I(1686, 983, 150, 17, '<path d="M0 8.500h150M75.500 5v7" stroke="#fff"/><path d="M32 0h6v17h-6z" fill="#fff"/>'),
    I(1841, 984, 14, 14, '<path d="M0 7h14M7 0v14" stroke="#fff" stroke-width="3"/>'),
    T(1873, 1902, 997, 15.5, '50%', c),
  ]);
});

/* ---------- Windows taskbar ---------- */
define('task-bar', `:host{height:72px;box-sizing:border-box;background:linear-gradient(90deg,#e2edf7 0,#e1ecf8 24%,#d3e1fa 30%,#d5dbf3 42%,#d3daef 55%,#d8dcee 68%,#e0e5f2 76%,#e1ebf6 80%,#e1edf8 100%);border-top:2px solid #b3b9c4}
 .pill{height:46px;border-radius:23px;background:#f3f6fd;border:1px solid #b9c6de;border-bottom-color:#a6b2ca;overflow:hidden}
 .red{height:60px;border-radius:6px;background:#e9afad}.act{height:57px;border-radius:6px;background:#edf1fb;border:1px solid #d3d9ea}`, () => {
  const dot = (dx, c = '#7c818c', w = 9, dy = 41) => `<rect x="${dx - w / 2}" y="${dy}" width="${w}" height="5" rx="2.500" fill="${c}"/>`;
  return row(1010, 70, [
    I(28, 1020, 42, 40, '<defs><linearGradient id="m" x1="0" y1="0" x2="0" y2="1"><stop offset="0" stop-color="#f5b63a"/><stop offset="1" stop-color="#ec7613"/></linearGradient></defs><path d="M6 19a5 5 0 010-10 7 7 0 0113-2 6 6 0 014 12z" fill="#8fb4f2"/><path d="M5 26a16 15 0 0019-7q4-4 10-1 2 6-1 12-4 8-13 8T5 26z" fill="url(#m)"/><circle cx="29.600" cy="9.500" r="12" fill="#c42b1c"/><text x="29.600" y="15" font-size="15" fill="#fff" text-anchor="middle" font-family="Open Sans">6</text>'),
    [76, 100, 1010, 70, row(1010, 34, [T(77, 111, 1038, 16.5, '82°F', 'color:#1b1b1b')], 76) + row(1044, 30, [T(77, 172, 1062, 16.5, 'Mostly clear', 'color:#5c6066')], 76)],
    I(407, 1027, 35, 35, '<defs><linearGradient id="w" x1="0" y1="0" x2="1" y2="1"><stop offset="0" stop-color="#54d2fc"/><stop offset="1" stop-color="#0067c8"/></linearGradient></defs><path d="M1 0h16v16.600H0V1zM18.400 0H34l1 1v15.600H18.400zM0 18.400h17V35H1l-1-1zM18.400 18.400H35V34l-1 1H18.400z" fill="url(#w)"/>'),
    [463, 327, 1021, 46, '<div class="pill">' + row(1022, 44, [
      I(480, 1033, 23, 23, '<circle cx="10" cy="9.500" r="8.300" stroke="#222" stroke-width="2.300"/><path d="M15.500 15.500l6 6.500" stroke="#222" stroke-width="2.800"/>'),
      T(519, 579, 1051, 19, 'Search', 'color:#5f6368'),
      I(713, 1026, 75, 39, '<path d="M1 30Q-2 21 10 18L26 8Q40 0 62 1l12 9v20l-10 8H12Q3 37 1 30z" fill="#5bb3c2"/><path d="M14 20q12-8 24-8t18-6l4 8-16 9-14-1-12 6z" fill="#a5dcd8"/><path d="M56 3q10-4 15 2l4 9-6 4-12-8z" fill="#6f8f3a"/><path d="M58 28l16-6v10l-10 6H52z" fill="#7aa834"/><path d="M4 26l4-8 4 8zM19 19l4-14 4 14zM31 16l3-8 4 8z" fill="#a8683b"/><path d="M23 19V7l3 12zM34 16v-6l3 6zM8 26v-6l3 6z" fill="#d99a63"/><path d="M36 38l4-15 5-8 5 6 2 17z" fill="#d08f58"/><path d="M42 20l3-5 3 8-3 15h-6z" fill="#e7b785"/><path d="M50 14l6-9 7-1 6 8-5 6-8 3z" fill="#d49258"/><path d="M50 38l2-16 6-5 5 8-1 12z" fill="#c58450"/><path d="M52 10l6-4 3 7-6 5z" fill="#edc391"/><path d="M18 38q10-5 9-15l4-1q6 7 8 16z" fill="#4b4b50"/><path d="M30 38q3-8-1-14" stroke="#f5c62e" stroke-width="1.800"/><path d="M59 9q12 4 12 18" stroke="#55555a" stroke-width="3.500"/><path d="M62 14q5 5 5 12" stroke="#c8442f" stroke-width="2"/>'),
    ], 464) + '</div>'],
    I(810, 1027, 36, 35, '<defs><linearGradient id="tv" x1="0" y1="0" x2="1" y2="1"><stop offset="0" stop-color="#fff"/><stop offset="1" stop-color="#d6d6d6"/></linearGradient></defs><rect y="9" width="27" height="25" rx="2" fill="#2a2a2a"/><rect x="9" y="0" width="27" height="25" rx="2" fill="url(#tv)"/><path d="M9 9h18v16H11q-2 0-2-2z" fill="#aaa"/>'),
    [864, 60, 1014, 60, '<div class="red">' + row(1014, 60, [I(876, 1026, 36, 36, '<defs><linearGradient id="el" x1="0" y1="0" x2="0" y2="1"><stop offset="0" stop-color="#43b2f7"/><stop offset="1" stop-color="#2786f5"/></linearGradient></defs><path d="M1 14Q3 3 12 3q5-5 12-2 4 2 4 5 8 5 8 14 0 8-3 16h-8l-1-7q-4 2-7 0l-1 7H8l-2-9q-6-4-5-13z" fill="url(#el)"/><path d="M17 5q0 10-6 14 9 2 15-4 3-5 1-9" stroke="#2489df" stroke-width="1.200"/><path d="M8 16q1.500-3 4-1z" fill="#1c67b4"/><path d="M4 21q1 5 4 7l-1 7q-4-4-4-14z" fill="#fff"/>' + dot(18, '#c42b1c', 9, 42))], 864) + '</div>'],
    I(942, 1027, 36, 36, '<defs><linearGradient id="fo" x1="0" y1="0" x2="1" y2="1"><stop offset="0" stop-color="#ffdc68"/><stop offset="1" stop-color="#fbb928"/></linearGradient></defs><path d="M0 3q0-2 2-2h9l4 4h19q2 0 2 2v5H0z" fill="#dfa00d"/><path d="M0 8h12l3-3h19q2 0 2 2v26q0 1-1 1H1q-1 0-1-1z" fill="url(#fo)"/><path d="M6 34V27q0-4 4-4h16q4 0 4 4v7z" fill="#1576c4"/><path d="M12 28.500h12" stroke="#0c4c8a" stroke-width="2"/>' + dot(18)),
    I(1008, 1027, 35, 35, '<defs><linearGradient id="st" x1="0" y1="0" x2="1" y2="1"><stop offset="0" stop-color="#0d6ebd"/><stop offset="1" stop-color="#25355c"/></linearGradient></defs><path d="M9 7V1h17v6" stroke="#3cb8ea" stroke-width="2"/><path d="M0 4h35v28q0 3-3 3H3q-3 0-3-3z" fill="url(#st)"/><path d="M9 4V7M26 4v3" stroke="#3cb8ea" stroke-width="2"/><path d="M10 12h7v7h-7z" fill="#f25022"/><path d="M18 12h7v7h-7z" fill="#7fba00"/><path d="M10 20h7v7h-7z" fill="#00a4ef"/><path d="M18 20h7v7h-7z" fill="#ffb900"/>'),
    I(1074, 1027, 36, 34, '<defs><linearGradient id="c1" x1="0" y1="0" x2="0" y2="1"><stop offset="0" stop-color="#0e5bd8"/><stop offset=".45" stop-color="#21a8d8"/><stop offset=".75" stop-color="#a6cf3a"/><stop offset="1" stop-color="#f6c416"/></linearGradient><linearGradient id="c2" x1="1" y1="0" x2="0" y2="1"><stop offset="0" stop-color="#a94fe0"/><stop offset=".5" stop-color="#ee5a9c"/><stop offset="1" stop-color="#fb8a38"/></linearGradient></defs><path d="M11 0h12q3 0 4 4l1 5h-5q-4 0-5 4l-3 9q-1 3-4 3H5q-6 0-5-6L5 4q2-4 6-4z" fill="url(#c1)"/><path d="M25 33H13q-3 0-4-4l-1-4h5q4 0 5-4l3-9q1-3 4-3h6q6 0 5 6l-5 14q-2 4-6 4z" fill="url(#c2)"/><path d="M17 10h5l-4 13h-4z" fill="#e7e2f4"/>'),
    I(1140, 1026, 36, 36, '<defs><linearGradient id="as" x1="0" y1="1" x2="1" y2="0"><stop offset=".7" stop-color="#0069df"/><stop offset="1" stop-color="#54a7f8"/></linearGradient></defs><path d="M0 0h36v36H0z" fill="url(#as)"/><path d="M6 27L13.500 9.500h4.500L10.500 27z" fill="#cfe4ff"/><path d="M13 27L21.500 9.500H25v12h-3.500v-4L17 27z" fill="#e8f3ff"/><path d="M25 9.500l3 12h-3z" fill="#9fc9fb"/><circle cx="26.500" cy="25.500" r="2.200" fill="#fff"/>'),
    [1196, 56, 1016, 57, '<div class="act">' + row(1017, 55, [I(1208, 1028, 32, 32, `<g transform="scale(1.320 1.280)">${wordLogo}</g>` + `<rect x="4" y="40" width="24" height="5" rx="2.500" fill="#0078d4"/>`)], 1197) + '</div>'],
    I(1272, 1026, 44, 36, '<circle cx="18" cy="18" r="18" fill="#2ba24c"/><path d="M18 18L2.400 9A18 18 0 0133.600 9z" fill="#e33b2e"/><path d="M18 18V9h15.600A18 18 0 0118 36z" fill="#fbc116"/><path d="M18 18l-7.800 4.500L2.400 9z" fill="#e33b2e"/><circle cx="18" cy="18" r="9" fill="#fff"/><circle cx="18" cy="18" r="7" fill="#3a7bea"/><circle cx="31.500" cy="5" r="11.500" fill="#e5e0dc" stroke="#a9a9ad" stroke-width="1.500"/><path d="M28 10q-1-12 4-13 6 1 4 10z" fill="#5d5455"/><circle cx="32" cy="2.500" r="3" fill="#d6a18b"/><path d="M27 13q2-5 5-5 5 1 5 5-5 3.500-10 0z" fill="#8fa0b8"/>' + dot(18, '#7c818c', 9, 42)),
    I(1338, 1030, 36, 27, '<path d="M0 2q0-2 2-2h32q2 0 2 2v23q0 2-2 2H2q-2 0-2-2z" fill="#353535"/><path d="M0 5V2q0-2 2-2h10v5z" fill="#c9c9c9"/><path d="M12 0h12v5H12z" fill="#999"/><path d="M24 0h10q2 0 2 2v3H24z" fill="#777"/><path d="M5.500 9l6 6.500-6 6.500" stroke="#ccc" stroke-width="3"/><path d="M17 21.500h12" stroke="#fff" stroke-width="3.500"/>' + dot(18, '#7c818c', 9, 38)),
    I(1408, 1026, 28, 36, '<path d="M0 30h28v4q0 2-2 2H2q-2 0-2-2z" fill="#b4520f"/><path d="M0 29h28v3H0z" fill="#eee"/><defs><linearGradient id="np" x1="0" y1="0" x2="0" y2="1"><stop offset="0" stop-color="#6cd4e8"/><stop offset="1" stop-color="#3dacd0"/></linearGradient></defs><path d="M0 4q0-2 2-2h24q2 0 2 2v26H0z" fill="url(#np)"/><path d="M4.500 0v5M11 0v5M17.500 0v5M24 0v5" stroke="#0c5b80" stroke-width="2.600"/><path d="M5 11h18M5 17h18M5 23h18" stroke="#0c6690" stroke-width="2"/>' + dot(14, '#7c818c', 9, 42)),
    I(1557, 1039, 16, 10, '<path d="M1 8.500L8 1.500l7 7" stroke="#1b1b1b" stroke-width="2"/>'),
    I(1602, 1032, 20, 24, '<g stroke="#54617f" stroke-width="1.300"><circle cx="10" cy="15" r="8.500"/><circle cx="10" cy="15" r="5"/><path d="M1.500 6q8.500-5.500 17 0M1 3.500q9-6 18 0"/></g>'),
    I(1649, 1036, 25, 20, '<path d="M5 15.500a4.500 4.500 0 010-9Q8 .5 13.500 1.200t6 5q5 1 5 5" fill="#aaa" stroke="#222" stroke-width="1.500"/><path d="M5 15.500a4.500 4.500 0 010-9q5 0 8 9z" fill="#ccc" stroke="#222"/><circle cx="17.500" cy="13.300" r="6.800" fill="#0067c0"/><path d="M17.500 12v5M17.500 9v1.700" stroke="#fff" stroke-width="1.700"/>'),
    I(1697, 1035, 24, 17, '<path d="M1 7Q12-4.500 23 7M4.500 10.200q7.500-7.500 15 0M8 13q4-4 8 0" stroke="#1b1b1b" stroke-width="1.700"/><circle cx="12" cy="15" r="2" fill="#1b1b1b"/>'),
    I(1733, 1034, 24, 20, '<path d="M1 6.500h4l5-5v17l-5-5H1z" stroke="#1b1b1b" stroke-width="1.500"/><path d="M13 7q2 3 0 6M16 4.500q4 5.500 0 11" stroke="#1b1b1b" stroke-width="1.600"/><path d="M19 2q6.500 8 0 16" stroke="#b5bbc3" stroke-width="1.600"/>'),
    I(1769, 1037, 24, 15, '<rect x=".8" y=".8" width="19.400" height="13" rx="3" stroke="#1b1b1b" stroke-width="1.600"/><path d="M3.500 3.500h10v7.500h-10z" fill="#1b1b1b"/><path d="M21 4.500h1.500q1 0 1 1v3.500q0 1-1 1H21z" fill="#1b1b1b"/>'),
    [1810, 90, 1010, 70, row(1010, 34, [T(1828, 1891, 1038, 16.5, '6:42 PM', 'color:#1b1b1b')], 1810) + row(1044, 30, [T(1819, 1891, 1062, 16.5, '7/2/2025', 'color:#1b1b1b')], 1810)],
  ]);
});

/* faint drawn backdrop behind the window buttons */
define('office-backdrop', ':host{position:absolute;left:1140px;top:0;width:780px;height:69px;pointer-events:none}', `<svg width="780" height="69" style="display:block"><defs><linearGradient id="f" x1="0" y1="0" x2="1" y2="0"><stop offset="0" stop-color="#eee" stop-opacity="0"/><stop offset=".4" stop-color="#ececec"/><stop offset="1" stop-color="#f1f1f1"/></linearGradient></defs><path d="M20 69Q80 25 140 33H375Q310 45 325 69z" fill="url(#f)"/><path d="M175 33Q200 48 190 62Q160 50 135 66Q125 52 145 33z" fill="#fafafa"/><path d="M195 57Q212 64 228 61M135 48Q148 52 160 44" fill="none" stroke="#ddd" stroke-width="2"/><path d="M340 69Q320 50 340 33H380Q355 45 352 60z" fill="#eaeaea"/><path d="M600 0H780V69H530L500 40Q560 33 600 33z" fill="#f5f5f5"/><path d="M355 62Q380 45 430 55Q490 64 525 67V69H350z" fill="#e6e6e6"/><path d="M600 0Q640 25 700 10T780 20V0z" fill="#ececec"/><path d="M518 48Q545 56 572 40" fill="none" stroke="#e2e2e2" stroke-width="3"/><path d="M610 30Q650 15 690 35T760 60L700 65Q660 30 610 30z" fill="#fbfbfb"/><path d="M275 69Q290 58 312 69z" fill="#dedede"/></svg>`);

define('word-desktop', ':host{width:1920px;height:1080px;position:relative;overflow:hidden;background:#fff}ribbon-tabs{position:relative}',
  '<office-backdrop></office-backdrop><title-bar></title-bar><ribbon-tabs></ribbon-tabs><ribbon-bar></ribbon-bar><work-space></work-space><status-bar></status-bar><task-bar></task-bar><apply-styles></apply-styles>');
</script>
</body>
</html>
